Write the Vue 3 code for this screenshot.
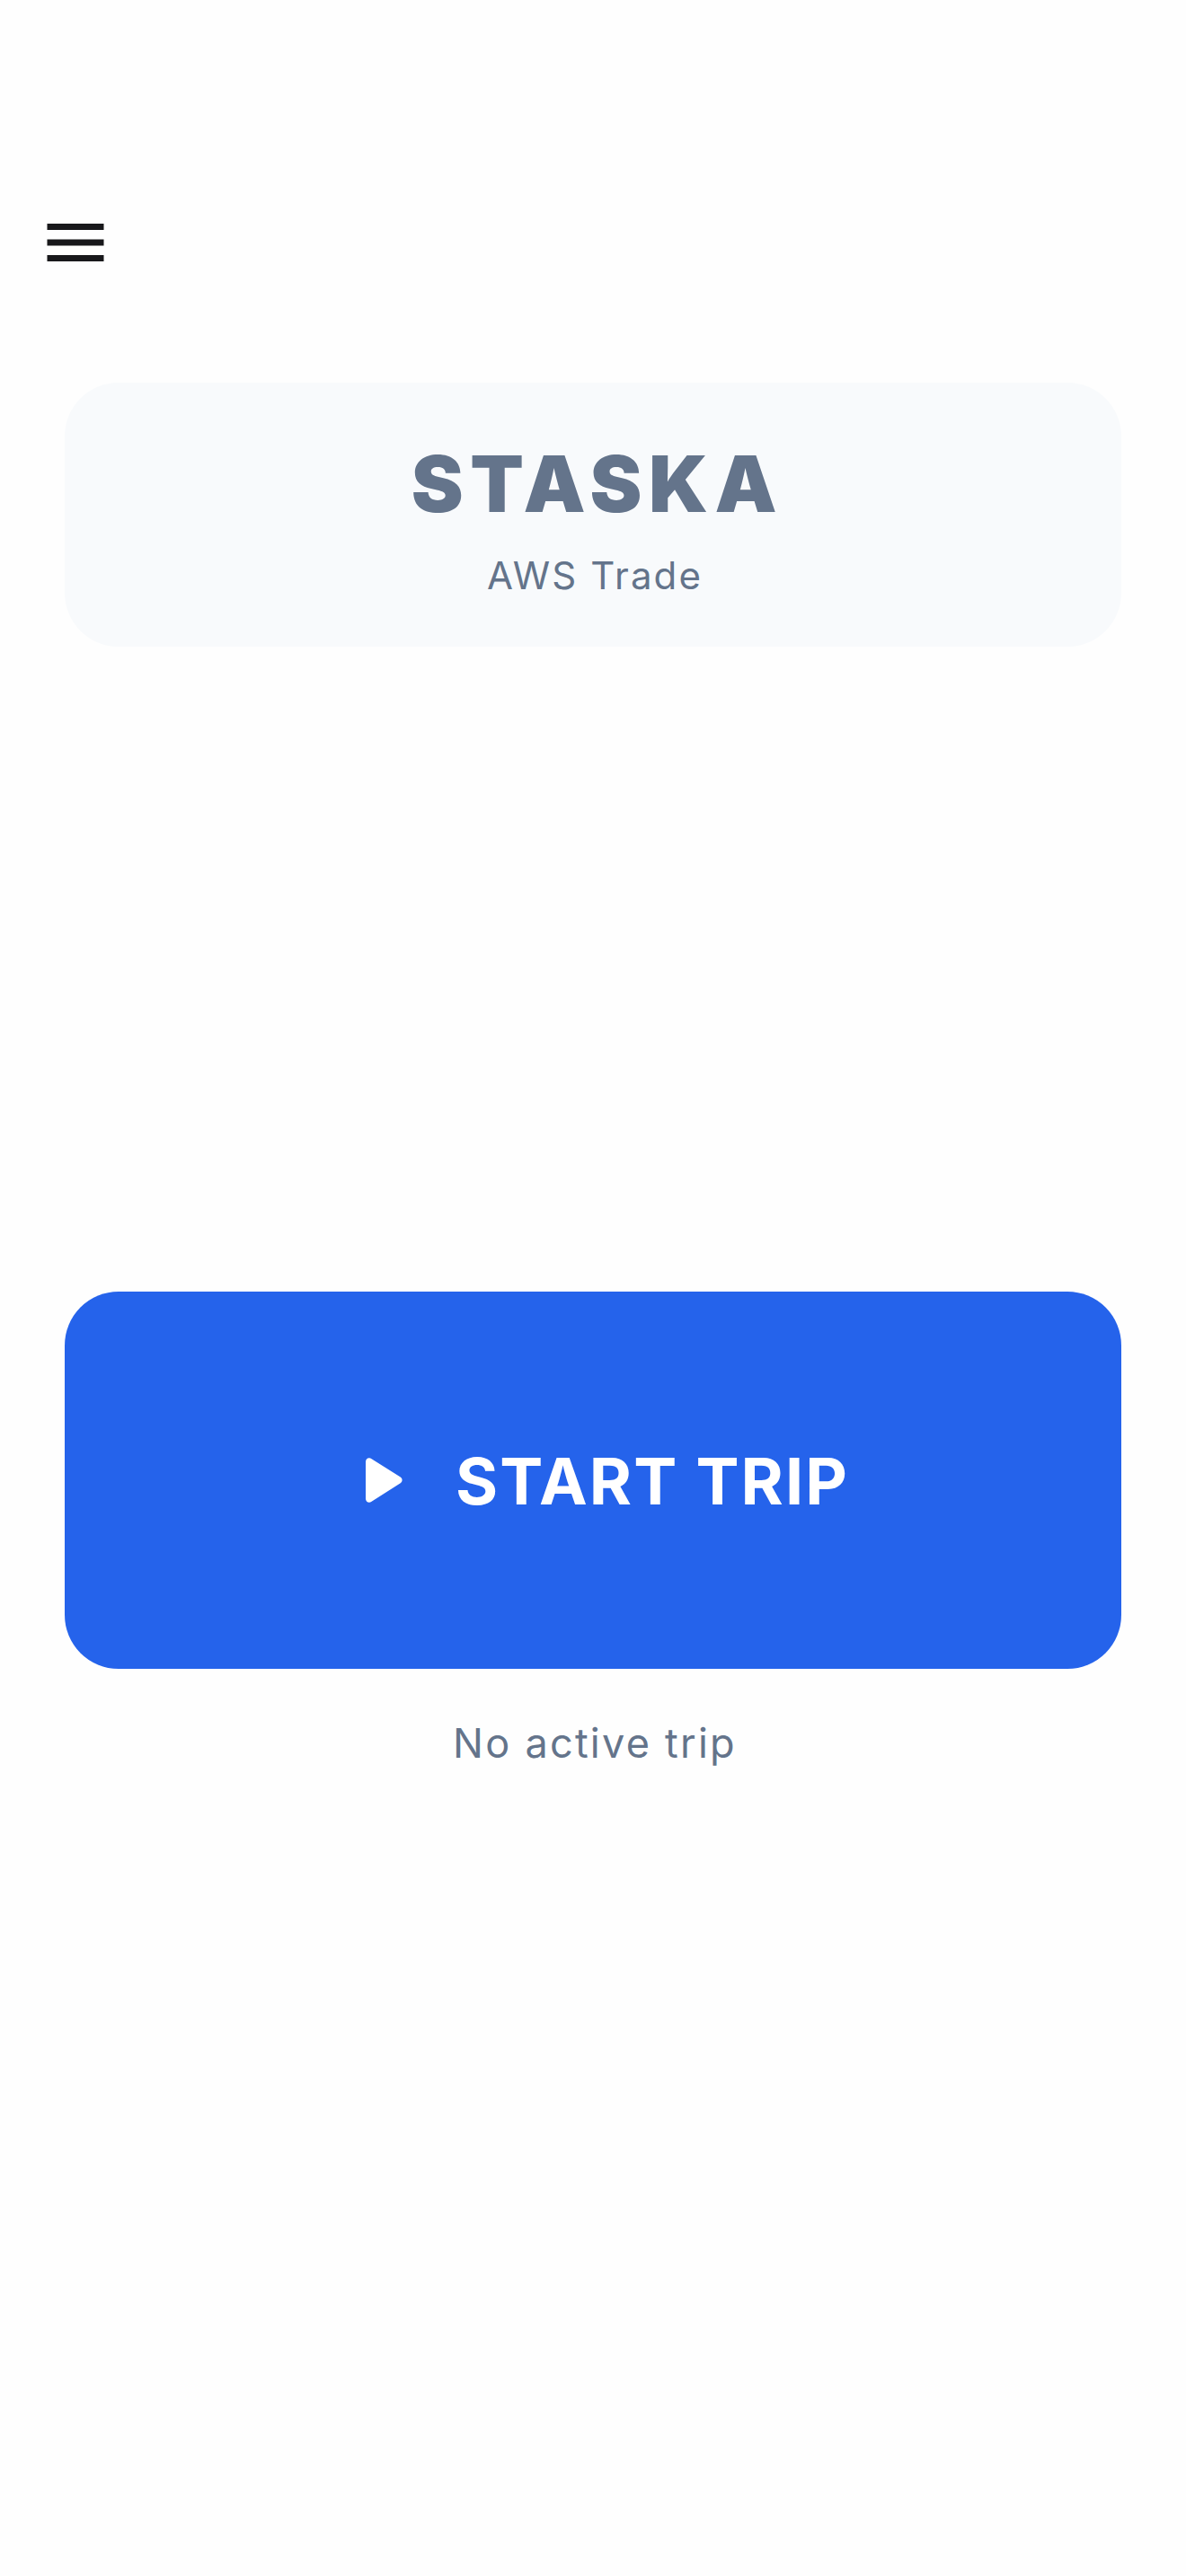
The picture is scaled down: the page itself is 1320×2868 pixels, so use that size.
<template>
  <div class="screen">
    <button class="menu-btn" aria-label="Menu">
      <svg class="menu-icon" viewBox="0 0 64 42" width="64" height="42">
        <rect x="0.5" y="0" width="63" height="7" />
        <rect x="0.5" y="17.5" width="63" height="7" />
        <rect x="0.5" y="35" width="63" height="7" />
      </svg>
    </button>

    <div class="brand-card">
      <h1 class="brand-title">STASKA</h1>
      <p class="brand-sub">AWS Trade</p>
    </div>

    <button class="start-btn">
      <svg class="play-icon" viewBox="0 0 24 24" width="96" height="96">
        <path d="M8 6.82v10.36c0 .79.87 1.27 1.54.84l8.14-5.18c.62-.39.62-1.29 0-1.69L9.54 5.98C8.87 5.55 8 6.03 8 6.82z" />
      </svg>
      <span>{{ label }}</span>
    </button>

    <p class="status">{{ status }}</p>
  </div>
</template>

<script setup>
const label = 'START TRIP'
const status = 'No active trip'
</script>

<style scoped>
.screen {
  min-height: 2868px;
  box-sizing: border-box;
  padding: 249px 72px 0;
  display: flex;
  flex-direction: column;
  background: #fefefe;
  font-family: Inter, "Liberation Sans", sans-serif;
}

.menu-btn {
  align-self: flex-start;
  margin-left: -20px;
  padding: 0;
  border: 0;
  background: none;
  display: flex;
}

.menu-icon {
  fill: #18181b;
}

.brand-card {
  margin-top: 135px;
  height: 294px;
  box-sizing: border-box;
  padding-top: 60px;
  border-radius: 60px;
  background: #f8fafc;
  text-align: center;
}

.brand-title {
  margin: 0;
  padding-left: 10px;
  font-size: 87px;
  line-height: 105px;
  font-weight: 900;
  letter-spacing: 7.5px;
  color: #64748b;
}

.brand-sub {
  margin: 24px 0 0;
  padding-left: 4px;
  font-size: 42px;
  line-height: 51px;
  letter-spacing: 2.1px;
  color: #64748b;
}

.start-btn {
  margin-top: 718px;
  height: 420px;
  border: 0;
  border-radius: 60px;
  background: #2563eb;
  color: #fff;
  font-family: inherit;
  font-size: 72px;
  font-weight: 700;
  letter-spacing: 2.1px;
  display: flex;
  align-items: center;
  justify-content: center;
  gap: 36px;
}

.play-icon {
  fill: #fff;
}

.status {
  margin: 56px 0 0;
  padding-left: 4px;
  text-align: center;
  font-size: 45px;
  line-height: 54px;
  letter-spacing: 2.25px;
  color: #64748b;
}
</style>
